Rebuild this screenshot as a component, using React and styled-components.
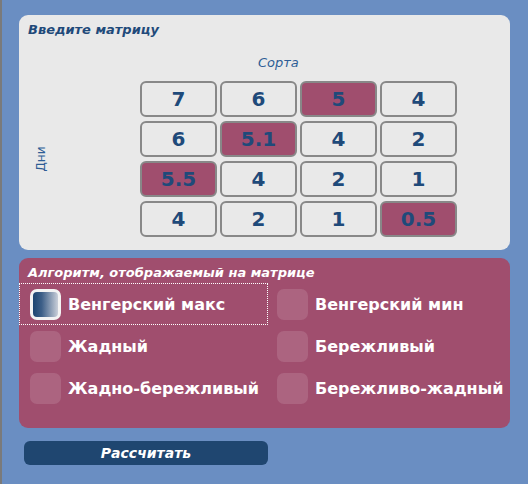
import React, { useState } from 'react';
import styled, { createGlobalStyle } from 'styled-components';

const Global = createGlobalStyle`
  html, body {
    margin: 0;
    padding: 0;
    background: #6a8ec2;
  }
  body {
    font-family: "DejaVu Sans", "Liberation Sans", sans-serif;
  }
`;

const Page = styled.div`
  width: 528px;
  height: 484px;
  box-sizing: border-box;
  border-left: 2px solid #7a7a7a;
  padding: 15px 18px 0 17px;
  display: flex;
  flex-direction: column;
`;

const MatrixPanel = styled.section`
  height: 235px;
  box-sizing: border-box;
  background: #e9e9e9;
  border-radius: 9px;
  padding: 6px 0 0 9px;
  display: flex;
  flex-direction: column;
`;

const Title = styled.h2`
  margin: 0;
  font-size: 13px;
  font-weight: bold;
  font-style: italic;
  line-height: 18px;
  color: ${p => p.$light ? '#ffffff' : '#1f4a7a'};
`;

const AxisTop = styled.div`
  margin: 16px 0 0 0;
  padding-left: 230px;
  font-size: 13px;
  font-style: italic;
  color: #2d5d95;
  line-height: 16px;
`;

const MatrixRow = styled.div`
  display: flex;
  align-items: center;
  margin-top: 10px;
`;

const AxisSide = styled.div`
  width: 112px;
  display: flex;
  justify-content: flex-start;
  padding-left: 0;
  box-sizing: border-box;
  span {
    display: inline-block;
    transform: rotate(-90deg);
    font-size: 12px;
    color: #2d5d95;
  }
`;

const Grid = styled.div`
  display: grid;
  grid-template-columns: repeat(4, 77px);
  grid-auto-rows: 36px;
  column-gap: 3px;
  row-gap: 4px;
`;

const Cell = styled.div`
  box-sizing: border-box;
  border: 2px solid #888;
  border-radius: 6px;
  background: ${p => p.$hit ? '#a04e6e' : '#e9e9e9'};
  display: flex;
  align-items: center;
  justify-content: center;
  font-size: 20px;
  font-weight: bold;
  color: #1f4a7a;
`;

const AlgoPanel = styled.section`
  margin-top: 8px;
  height: 170px;
  box-sizing: border-box;
  background: #a04e6e;
  border-radius: 9px;
  padding: 6px 0 0 0;
  display: flex;
  flex-direction: column;
  ${Title} {
    padding-left: 9px;
  }
`;

const Options = styled.div`
  display: grid;
  grid-template-columns: 249px 1fr;
  grid-auto-rows: 42px;
  margin-top: 1px;
`;

const Option = styled.label`
  display: flex;
  align-items: center;
  gap: 7px;
  padding-left: ${p => p.$right ? '9px' : '11px'};
  box-sizing: border-box;
  outline: ${p => p.$focus ? '1px dotted #ffffff' : 'none'};
  outline-offset: -1px;
  font-size: 16px;
  font-weight: bold;
  color: #ffffff;
  cursor: pointer;
`;

const Box = styled.span`
  width: 31px;
  height: 31px;
  box-sizing: border-box;
  border-radius: 7px;
  flex-shrink: 0;
  background: ${p => p.$on
    ? 'linear-gradient(90deg, #1c4470 0%, #3d5f88 35%, #c9cfd9 100%)'
    : 'rgba(255,255,255,0.13)'};
  border: ${p => p.$on ? '3px solid #f3f3f3' : 'none'};
`;

const Button = styled.button`
  margin: 13px 0 0 5px;
  width: 244px;
  height: 24px;
  border: none;
  border-radius: 6px;
  background: #1f4670;
  color: #ffffff;
  font-family: "DejaVu Sans", "Liberation Sans", sans-serif;
  font-size: 14px;
  font-weight: bold;
  font-style: italic;
  cursor: pointer;
`;

const matrix = [
  ['7', '6', '5', '4'],
  ['6', '5.1', '4', '2'],
  ['5.5', '4', '2', '1'],
  ['4', '2', '1', '0.5'],
];
const path = [[0, 2], [1, 1], [2, 0], [3, 3]];

const algos = [
  'Венгерский макс',
  'Венгерский мин',
  'Жадный',
  'Бережливый',
  'Жадно-бережливый',
  'Бережливо-жадный',
];

export default function App() {
  const [picked, setPicked] = useState(0);
  return (
    <Page>
      <Global />
      <MatrixPanel>
        <Title>Введите матрицу</Title>
        <AxisTop>Сорта</AxisTop>
        <MatrixRow>
          <AxisSide><span>Дни</span></AxisSide>
          <Grid>
            {matrix.map((row, r) => row.map((v, c) => (
              <Cell key={r + '-' + c} $hit={path.some(([pr, pc]) => pr === r && pc === c)}>{v}</Cell>
            )))}
          </Grid>
        </MatrixRow>
      </MatrixPanel>
      <AlgoPanel>
        <Title $light>Алгоритм, отображаемый на матрице</Title>
        <Options>
          {algos.map((a, i) => (
            <Option key={a} $right={i % 2 === 1} $focus={i === picked} onClick={() => setPicked(i)}>
              <Box $on={i === picked} />
              {a}
            </Option>
          ))}
        </Options>
      </AlgoPanel>
      <div>
        <Button>Рассчитать</Button>
      </div>
    </Page>
  );
}
